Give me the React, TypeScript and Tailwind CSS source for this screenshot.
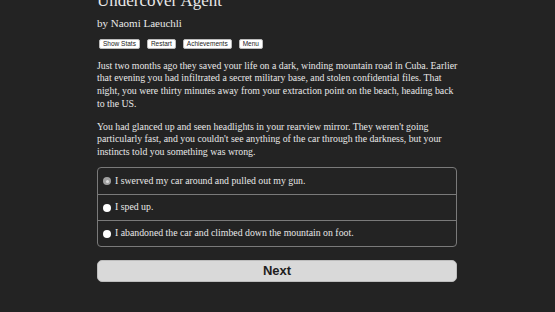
const serif = "font-['Liberation_Serif','Times_New_Roman',serif]"

const choices = [
  "I swerved my car around and pulled out my gun.",
  "I sped up.",
  "I abandoned the car and climbed down the mountain on foot.",
]

function MenuButton({ label }: { label: string }) {
  return (
    <button className="rounded-[2px] border border-[#bbb] bg-white px-[3px] font-['Liberation_Sans',Arial,sans-serif] text-[6.5px] leading-[7.5px] text-[#222]">
      {label}
    </button>
  )
}

export default function App() {
  return (
    <div className={`h-[312px] w-full overflow-hidden bg-[#232323] text-[#e8e8e8] ${serif}`}>
      <div className="mx-auto w-[361px]">
        <h1 className="-mt-[9px] text-[17px] leading-[20px] font-normal">Undercover Agent</h1>
        <div className="mt-[6px] text-[11px] leading-[13px]">by Naomi Laeuchli</div>
        <div className="mt-[9px] flex gap-[7px] pl-[2px]">
          <MenuButton label="Show Stats" />
          <MenuButton label="Restart" />
          <MenuButton label="Achievements" />
          <MenuButton label="Menu" />
        </div>
        <div className="mt-[11px] text-[9.8px] leading-[12.8px]">
          <p>
            Just two months ago they saved your life on a dark, winding mountain road in Cuba. Earlier
            <br />
            that evening you had infiltrated a secret military base, and stolen confidential files. That
            <br />
            night, you were thirty minutes away from your extraction point on the beach, heading back
            <br />
            to the US.
          </p>
          <p className="mt-[10px]">
            You had glanced up and seen headlights in your rearview mirror. They weren't going
            <br />
            particularly fast, and you couldn't see anything of the car through the darkness, but your
            <br />
            instincts told you something was wrong.
          </p>
        </div>
        <div className="mt-[8px] w-[360px] overflow-hidden rounded-[4px] border border-[#7a7a7a]">
          {choices.map((c, i) => (
            <label
              key={c}
              className={`flex h-[26px] items-center gap-[4px] pl-[5px] text-[9.8px] ${i > 0 ? "border-t border-[#7a7a7a]" : "h-[25px]"}`}
            >
              <span
                className={`flex h-[8px] w-[8px] items-center justify-center rounded-full ${i === 0 ? "bg-[#a0a0a0]" : "bg-white"}`}
              >
                {i === 0 && <span className="h-[3px] w-[3px] rounded-full bg-[#dcdcdc]" />}
              </span>
              {c}
            </label>
          ))}
        </div>
        <button className="mt-[13px] flex h-[22px] w-[360px] items-center justify-center rounded-[5px] border border-[#bdbdbd] bg-[#d9d9d9] font-['Liberation_Sans',Arial,sans-serif] text-[13px] font-bold text-[#1e1e1e]">
          Next
        </button>
      </div>
    </div>
  )
}
